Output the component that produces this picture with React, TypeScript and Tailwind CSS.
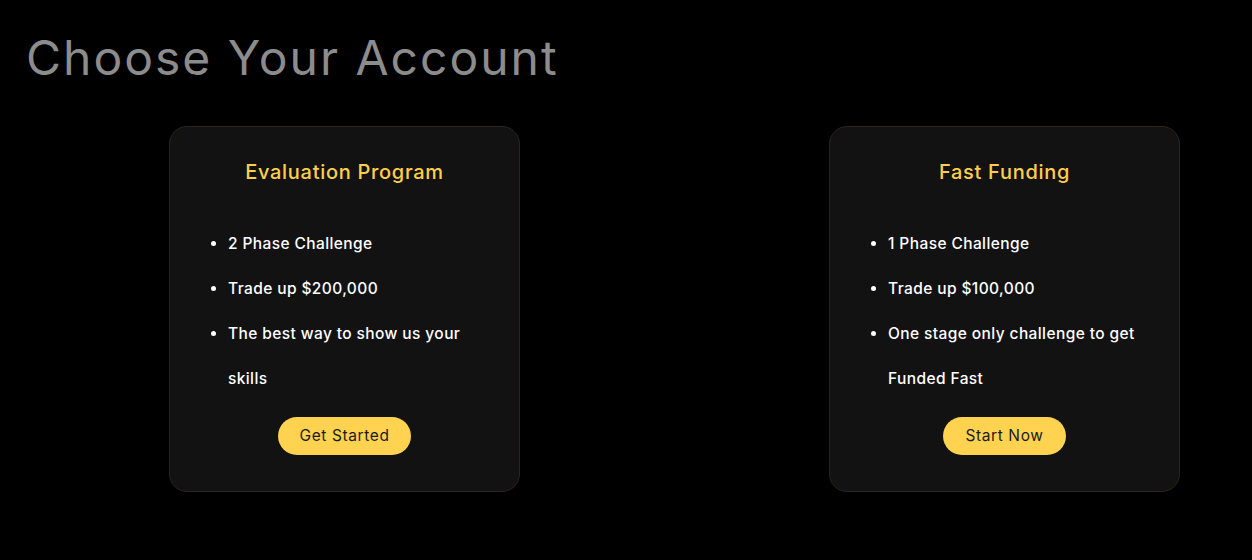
import React from "react";

const cards = [
  {
    title: "Evaluation Program",
    items: ["2 Phase Challenge", "Trade up $200,000", "The best way to show us your skills"],
    cta: "Get Started",
  },
  {
    title: "Fast Funding",
    items: ["1 Phase Challenge", "Trade up $100,000", "One stage only challenge to get Funded Fast"],
    cta: "Start Now",
  },
];

export default function App() {
  return (
    <div className="w-[1252px] h-[560px] bg-black overflow-hidden" style={{ fontFamily: "Inter, 'Noto Sans', sans-serif" }}>
      <h1 className="pl-[26px] pt-[26px] text-[48px] leading-[64px] font-normal text-[#8c8c8c] tracking-[2px]">
        Choose Your Account
      </h1>
      <div className="flex gap-[309px] pl-[169px] mt-[36px]">
        {cards.map((c) => (
          <div
            key={c.title}
            className="w-[351px] h-[366px] rounded-[18px] border border-[#2a2619] bg-[#121212] flex flex-col items-center pt-[31px]"
          >
            <h2 className="text-[20px] leading-[28px] font-medium text-[#ffcf4a] tracking-[0.7px]">{c.title}</h2>
            <ul className="list-disc w-full pl-[58px] pr-[30px] mt-[35px] text-white text-[15.5px] font-medium leading-[45px] tracking-[0.4px] marker:text-white">
              {c.items.map((it) => (
                <li key={it}>{it}</li>
              ))}
            </ul>
            <button className="mt-[16px] h-[38px] px-[22px] rounded-full bg-[#ffd24f] text-[#1a1a1a] text-[15.5px] tracking-[0.6px]">
              {c.cta}
            </button>
          </div>
        ))}
      </div>
    </div>
  );
}
